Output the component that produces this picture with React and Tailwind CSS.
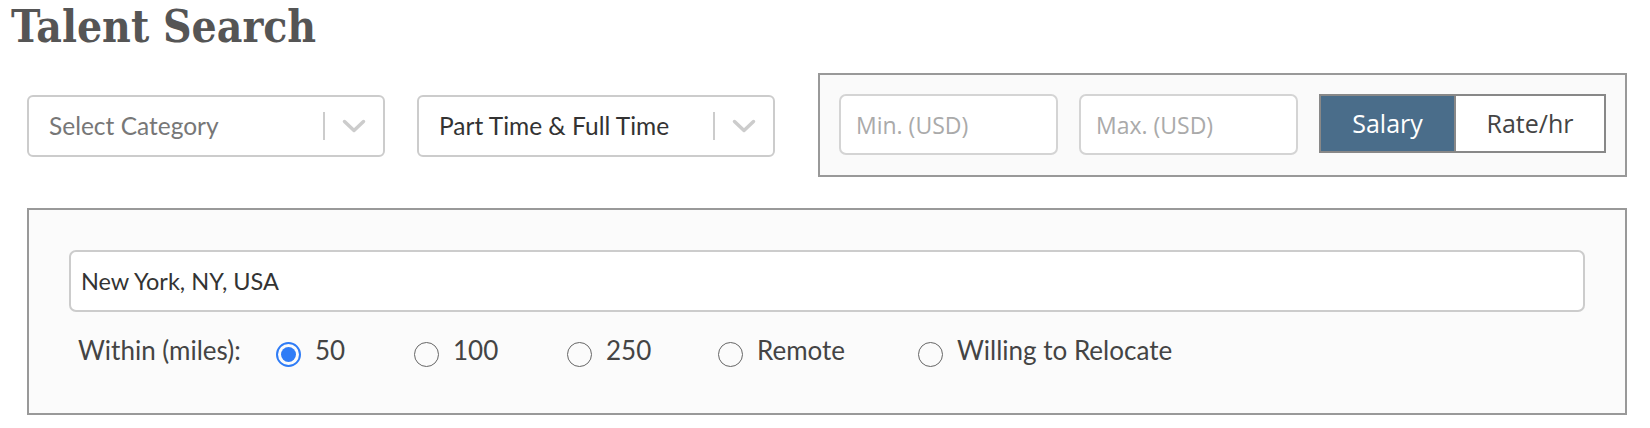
import { useState } from 'react';

const body = { fontFamily: 'Lato, "Noto Sans", sans-serif' };

function Chevron() {
    return (
        <svg width="24" height="14" viewBox="0 0 24 14" fill="none">
            <path d="M2.5 2.5l9.5 9 9.5-9" stroke="#cccccc" strokeWidth="3.5" strokeLinecap="round" strokeLinejoin="round" />
        </svg>
    );
}

function Select({ label, muted }) {
    return (
        <div className="w-[358px] h-[62px] border-2 border-[#cccccc] rounded-[6px] bg-white flex items-center pl-[20px] pr-[17px]">
            <span className={`flex-1 text-[24.5px] ${muted ? 'text-[#777777]' : 'text-[#333333]'}`}>{label}</span>
            <span className="w-[2px] h-[28px] bg-[#cccccc] mr-[17px]" />
            <Chevron />
        </div>
    );
}

function Radio({ label, checked, onClick }) {
    return (
        <label onClick={onClick} className="flex items-center cursor-pointer">
            <span className={`w-[25px] h-[25px] rounded-full flex items-center justify-center mt-[8px] ${checked ? 'border-[2.5px] border-[#2f7cf6]' : 'border-[1.5px] border-[#666666]'}`}>
                {checked && <span className="w-[15px] h-[15px] rounded-full bg-[#2f7cf6]" />}
            </span>
            <span className="ml-[14px] text-[26px] text-[#444444]">{label}</span>
        </label>
    );
}

export default function App() {
    const [radius, setRadius] = useState('50');
    const [payType, setPayType] = useState('salary');

    const options = [
        { key: '50', label: '50', width: 'w-[138px]' },
        { key: '100', label: '100', width: 'w-[153px]' },
        { key: '250', label: '250', width: 'w-[151px]' },
        { key: 'remote', label: 'Remote', width: 'w-[200px]' },
        { key: 'relocate', label: 'Willing to Relocate', width: '' },
    ];

    return (
        <div className="w-[1650px] h-[428px] bg-white" style={body}>
            <h1
                className="pl-[11px] pt-[2px] h-[53px] text-[44px] leading-[50px] font-bold text-[#555555] font-stretch-condensed"
                style={{ fontFamily: '"DejaVu Serif Condensed", "DejaVu Serif", serif' }}
            >
                Talent Search
            </h1>

            <div className="w-[1600px] ml-[27px]">
                {/* Top filters */}
                <div className="flex items-start mt-[20px]">
                    <div className="mt-[22px]">
                        <Select label="Select Category" muted />
                    </div>
                    <div className="mt-[22px] ml-[32px]">
                        <Select label="Part Time & Full Time" />
                    </div>

                    <div
                        className="ml-[43px] flex-1 h-[104px] border-2 border-[#999999] bg-[#fafafa] flex items-start pt-[19px] pl-[19px]"
                        style={{ fontFamily: '"Open Sans", sans-serif' }}
                    >
                        <input
                            placeholder="Min. (USD)"
                            className="w-[219px] h-[61px] border-2 border-[#d4d4d4] rounded-[7px] bg-white px-[15px] text-[23px] text-[#333333] placeholder:text-[#aaaaaa] outline-none"
                        />
                        <input
                            placeholder="Max. (USD)"
                            className="ml-[21px] w-[219px] h-[61px] border-2 border-[#d4d4d4] rounded-[7px] bg-white px-[15px] text-[23px] text-[#333333] placeholder:text-[#aaaaaa] outline-none"
                        />
                        <div className="ml-[21px] flex h-[59px] border-2 border-[#888888]">
                            <button
                                onClick={() => setPayType('salary')}
                                className={`w-[133px] text-[25px] ${payType === 'salary' ? 'bg-[#4a6d8a] text-white' : 'bg-white text-[#444444]'}`}
                            >
                                Salary
                            </button>
                            <button
                                onClick={() => setPayType('rate')}
                                className={`w-[150px] text-[25px] border-l-2 border-[#888888] ${payType === 'rate' ? 'bg-[#4a6d8a] text-white' : 'bg-white text-[#444444]'}`}
                            >
                                Rate/hr
                            </button>
                        </div>
                    </div>
                </div>

                {/* Location */}
                <div className="mt-[31px] h-[207px] border-2 border-[#999999] bg-[#fbfbfb] pt-[40px] px-[40px]">
                    <input
                        defaultValue="New York, NY, USA"
                        className="w-full h-[62px] border-2 border-[#cccccc] rounded-[7px] bg-white px-[10px] text-[23.5px] text-[#333333] outline-none"
                    />
                    <div className="flex items-center mt-[18px] pl-[9px] h-[40px]">
                        <span className="text-[26px] text-[#444444] w-[198px]">Within (miles):</span>
                        {options.map((o) => (
                            <div key={o.key} className={o.width}>
                                <Radio label={o.label} checked={radius === o.key} onClick={() => setRadius(o.key)} />
                            </div>
                        ))}
                    </div>
                </div>
            </div>
        </div>
    );
}
